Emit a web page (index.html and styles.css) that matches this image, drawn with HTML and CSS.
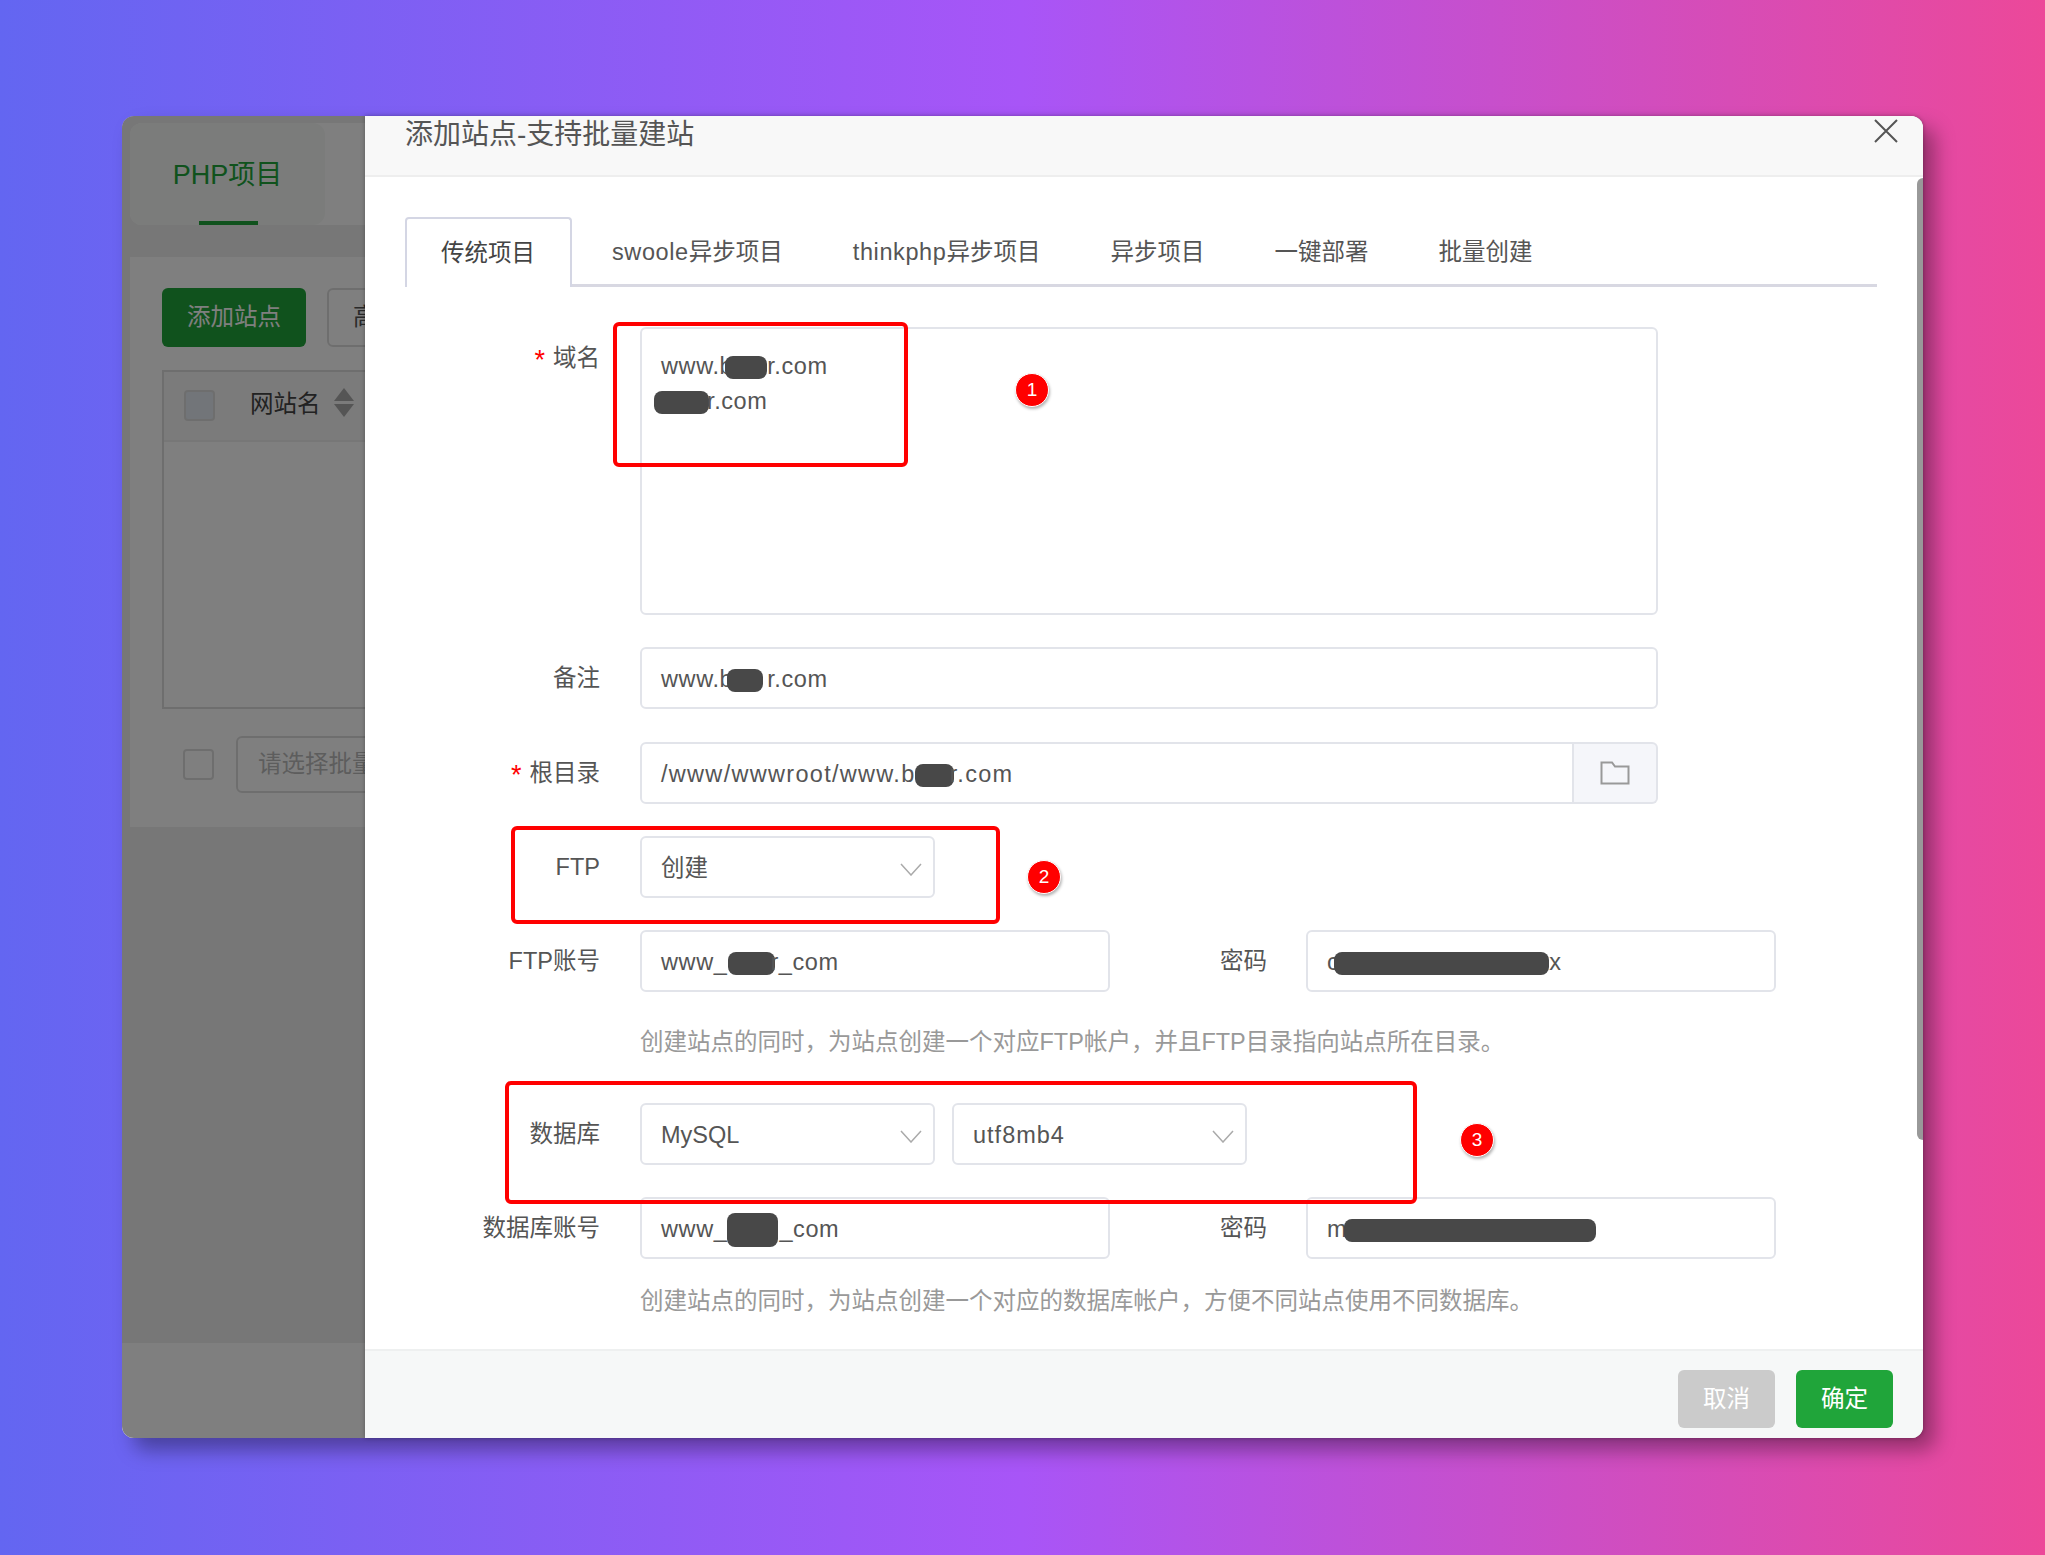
FILE: index.html
```html
<!DOCTYPE html>
<html lang="en">
<head>
    <meta charset="UTF-8">
    <title>添加站点</title>
    <link rel="stylesheet" href="styles.css">
</head>
<body>
<div class="window">

    <!-- page behind the dialog -->
    <div class="page">
        <div class="page-tabs">
            <div class="page-tab">PHP项目<i class="page-tab-line"></i></div>
        </div>
        <div class="page-card">
            <div class="page-btns">
                <div class="btn-add">添加站点</div>
                <div class="btn-adv">高级设置</div>
            </div>
            <div class="page-table">
                <div class="page-table-head">
                    <i class="check check-head"></i>
                    <span class="th-name">网站名</span>
                    <i class="sort"></i>
                </div>
            </div>
            <div class="page-batch">
                <i class="check"></i>
                <div class="batch-select">请选择批量操作</div>
            </div>
        </div>
        <div class="page-foot"></div>
    </div>
    <div class="shade"></div>

    <!-- dialog -->
    <div class="modal">
        <div class="modal-head">
            <div class="modal-title">添加站点-支持批量建站</div>
            <svg class="modal-close" width="24" height="24" viewBox="0 0 24 24"><path d="M1 1L23 23M23 1L1 23" stroke="#555" stroke-width="2" fill="none"/></svg>
        </div>
        <div class="modal-body">
            <div class="tabs">
                <div class="tab tab-on">传统项目</div>
                <div class="tab"><span class="lat">swoole</span>异步项目</div>
                <div class="tab"><span class="lat">thinkphp</span>异步项目</div>
                <div class="tab">异步项目</div>
                <div class="tab">一键部署</div>
                <div class="tab">批量创建</div>
            </div>

            <div class="form">
                <div class="row">
                    <div class="label"><em>*</em>域名</div>
                    <div class="field area">
                        <div>www.b<i class="blob b-d1"></i>r.com</div>
                        <div><i class="blob b-d2"></i>r.com</div>
                    </div>
                </div>
                <div class="row">
                    <div class="label">备注</div>
                    <div class="field wide">www.b<i class="blob b-note"></i>r.com</div>
                </div>
                <div class="row">
                    <div class="label"><em>*</em>根目录</div>
                    <div class="group">
                        <div class="field group-input">/www/wwwroot/www.b<i class="blob b-root"></i>r.com</div>
                        <div class="group-btn">
                            <svg width="30" height="24" viewBox="0 0 30 24"><path d="M1.5 1.5H12L15 5.5H28.5V22.5H1.5Z" fill="none" stroke="#999" stroke-width="2"/></svg>
                        </div>
                    </div>
                </div>
                <div class="row">
                    <div class="label">FTP</div>
                    <div class="field select">创建
                        <svg class="caret" width="22" height="13" viewBox="0 0 22 13"><path d="M1 1L11 12L21 1" fill="none" stroke="#aaa" stroke-width="1.5"/></svg>
                    </div>
                </div>
                <div class="row row-pair">
                    <div class="label">FTP账号</div>
                    <div class="field half">www_<i class="blob b-ftp"></i>r_com</div>
                    <div class="label label-pass">密码</div>
                    <div class="field half half-pass">c<i class="blob b-pass"></i>x</div>
                </div>
                <div class="help">创建站点的同时，为站点创建一个对应FTP帐户，并且FTP目录指向站点所在目录。</div>
                <div class="row">
                    <div class="label">数据库</div>
                    <div class="field select">MySQL
                        <svg class="caret" width="22" height="13" viewBox="0 0 22 13"><path d="M1 1L11 12L21 1" fill="none" stroke="#aaa" stroke-width="1.5"/></svg>
                    </div>
                    <div class="field select select-2">utf8mb4
                        <svg class="caret" width="22" height="13" viewBox="0 0 22 13"><path d="M1 1L11 12L21 1" fill="none" stroke="#aaa" stroke-width="1.5"/></svg>
                    </div>
                </div>
                <div class="row row-pair">
                    <div class="label">数据库账号</div>
                    <div class="field half">www_<i class="blob b-db"></i>_com</div>
                    <div class="label label-pass">密码</div>
                    <div class="field half half-pass">m<i class="blob b-dbpass"></i></div>
                </div>
                <div class="help help-tight">创建站点的同时，为站点创建一个对应的数据库帐户，方便不同站点使用不同数据库。</div>
            </div>
            <div class="scrollbar"></div>
        </div>
        <div class="modal-foot">
            <div class="btn btn-cancel">取消</div>
            <div class="btn btn-ok">确定</div>
        </div>
    </div>

    <!-- red notes drawn on the screenshot -->
    <div class="mark mark-1"></div>
    <div class="mark mark-2"></div>
    <div class="mark mark-3"></div>
    <div class="badge badge-1">1</div>
    <div class="badge badge-2">2</div>
    <div class="badge badge-3">3</div>
</div>
</body>
</html>
```

FILE: styles.css
```css
*{
    box-sizing: border-box;
}
html,body{
    margin: 0;
    height: 100%;
}
body{
    padding: 116px 122px 117px;
    background: linear-gradient(to right, #6366f1, #a855f7 50%, #ec4899);
    font-family: "Liberation Sans", "Noto Sans CJK SC", sans-serif;
    font-size: 23.5px;
    color: #555;
    overflow: hidden;
}
i,em{
    font-style: normal;
}
.window{
    position: relative;
    height: 1322px;
    border-radius: 12px;
    box-shadow: 12px 12px 20px rgba(0,0,0,0.35);
}

/* page behind */
.page{
    height: 100%;
    display: flex;
    flex-direction: column;
    background: #efefef;
    border-radius: 12px;
    overflow: hidden;
}
.page-tabs{
    margin: 7px 0 32px 8px;
    height: 102px;
    background: #fff;
    border-radius: 12px 0 0 12px;
}
.page-tab{
    position: relative;
    width: 195px;
    height: 102px;
    background: #f6f9f6;
    border-radius: 12px;
    color: #20a53a;
    font-size: 27px;
    line-height: 104px;
    text-align: center;
}
.page-tab-line{
    position: absolute;
    left: 69px;
    bottom: 0;
    width: 59px;
    height: 4px;
    background: #20a53a;
}
.page-card{
    margin-left: 8px;
    height: 570px;
    padding: 31px 0 0 32px;
    background: #fff;
}
.page-btns{
    display: flex;
    gap: 21px;
}
.btn-add{
    width: 144px;
    height: 59px;
    line-height: 59px;
    text-align: center;
    color: #fff;
    background: #20a53a;
    border-radius: 6px;
}
.btn-adv{
    flex: none;
    width: 140px;
    height: 59px;
    line-height: 55px;
    padding-left: 24px;
    border: 2px solid #ddd;
    border-radius: 6px;
    white-space: nowrap;
}
.page-table{
    margin-top: 23px;
    height: 339px;
    border: 2px solid #ddd;
}
.page-table-head{
    display: flex;
    align-items: center;
    height: 70px;
    padding-left: 20px;
    background: #f6f6f6;
    border-bottom: 2px solid #eee;
}
.check{
    flex: none;
    width: 31px;
    height: 31px;
    border: 2px solid #ddd;
    border-radius: 4px;
}
.check-head{
    background: #e4ebf2;
    margin-bottom: 2px;
}
.th-name{
    margin: 0 0 8px 35px;
    color: #444;
}
.sort{
    position: relative;
    margin: 0 0 8px 23px;
    height: 29px;
}
.sort::before,.sort::after{
    content: "";
    position: absolute;
    left: -10px;
    border-left: 10px solid transparent;
    border-right: 10px solid transparent;
}
.sort::before{
    top: 0;
    border-bottom: 13px solid #aaa;
}
.sort::after{
    bottom: 0;
    border-top: 13px solid #aaa;
}
.page-batch{
    display: flex;
    align-items: center;
    gap: 22px;
    margin: 27px 0 0 21px;
}
.batch-select{
    flex: none;
    width: 250px;
    height: 57px;
    line-height: 53px;
    padding-left: 20px;
    border: 2px solid #ddd;
    border-radius: 6px;
    color: #bbb;
    white-space: nowrap;
}
.page-foot{
    margin-top: auto;
    height: 95px;
    background: #fff;
}
.shade{
    position: absolute;
    inset: 0;
    background: rgba(0,0,0,0.5);
    border-radius: 12px;
}

/* dialog */
.modal{
    position: absolute;
    top: 0;
    left: 243px;
    right: 0;
    bottom: 0;
    display: flex;
    flex-direction: column;
    background: #fff;
    border-radius: 0 12px 12px 0;
    box-shadow: 0 0 4px rgba(0,0,0,0.3);
    overflow: hidden;
}
.modal-head{
    flex: none;
    display: flex;
    justify-content: space-between;
    height: 61px;
    padding: 0 25px 0 40px;
    background: #f8f8f8;
    border-bottom: 2px solid #eee;
}
.modal-title{
    font-size: 28px;
    line-height: 37px;
}
.modal-close{
    margin-top: 3px;
}
.modal-body{
    position: relative;
    flex: 1;
    padding: 40px 46px 0 40px;
}
.tabs{
    display: flex;
    height: 70px;
    border-bottom: 3px solid #d8d8e2;
}
.tab{
    height: 70px;
    padding: 0 35px;
    line-height: 70px;
    white-space: nowrap;
}
.lat{
    letter-spacing: 0.6px;
}
.tab-on{
    width: 167px;
    margin-right: 5px;
    border: 2px solid #d4d6e4;
    border-bottom: 0;
    border-radius: 4px 4px 0 0;
    background: #fff;
    color: #444;
    padding: 0 34px;
    line-height: 68px;
}
.form{
    margin-top: 40px;
}
.row{
    display: flex;
    margin-bottom: 32.3px;
}
.label{
    flex: none;
    width: 195px;
    margin-right: 40px;
    line-height: 62px;
    text-align: right;
    white-space: nowrap;
}
.label em{
    margin-right: 8px;
    font-size: 27px;
    line-height: 0;
    vertical-align: -3px;
    color: #f00;
}
.field{
    position: relative;
    flex: none;
    height: 62px;
    padding: 0 19px;
    line-height: 61px;
    letter-spacing: 0.6px;
    border: 2px solid #e2e4ea;
    border-radius: 6px;
    white-space: nowrap;
    overflow: hidden;
}
.area{
    width: 1018px;
    height: 288px;
    padding-top: 20px;
    line-height: 35px;
}
.wide{
    width: 1018px;
}
.group{
    display: flex;
    width: 1018px;
}
.group-input{
    flex: 1;
    letter-spacing: 1.3px;
    border-radius: 6px 0 0 6px;
}
.group-btn{
    flex: none;
    display: flex;
    align-items: center;
    justify-content: center;
    width: 84px;
    height: 62px;
    background: #f5f6fa;
    border: 2px solid #e2e4ea;
    border-left: 0;
    border-radius: 0 6px 6px 0;
}
.select{
    width: 295px;
    letter-spacing: 0;
}
.select-2{
    margin-left: 17px;
    letter-spacing: 1px;
}
.caret{
    position: absolute;
    right: 11px;
    top: 25px;
}
.half{
    width: 470px;
}
.label-pass{
    width: 157px;
    margin-right: 39px;
}
.help{
    margin: 33px 0 44px 235px;
    line-height: 34px;
    color: #999;
    white-space: nowrap;
}
.row-pair{
    margin-bottom: 0;
}
.help-tight{
    margin-top: 25px;
    margin-bottom: 0;
}

/* covered parts of the text */
.blob{
    display: inline-block;
    height: 23px;
    vertical-align: -5px;
    background: #484848;
    border-radius: 8px;
}
.b-d1{
    width: 42px;
    margin: 0 0 0 -8px;
}
.b-d2{
    width: 55px;
    margin: 0 -2px 0 -7px;
}
.b-note{
    width: 36px;
    margin: 0 4px 0 -6px;
}
.b-root{
    width: 39px;
    margin: 0 -4px 0 -1px;
}
.b-ftp{
    width: 47px;
    margin: 0 -5px 0 1px;
}
.b-pass{
    width: 215px;
    margin: 0 0 0 -5px;
}
.b-db{
    width: 51px;
    height: 34px;
    vertical-align: -10px;
    margin: 0 1px 0 0;
}
.b-dbpass{
    width: 252px;
    margin-left: -3.5px;
}

/* footer */
.modal-foot{
    flex: none;
    display: flex;
    justify-content: flex-end;
    gap: 21px;
    height: 89px;
    padding: 19px 30px 0 0;
    background: #f6f8f8;
    border-top: 2px solid #eef0f0;
}
.btn{
    width: 97px;
    height: 58px;
    line-height: 58px;
    text-align: center;
    color: #fff;
    border-radius: 6px;
}
.btn-cancel{
    background: #cbcbcb;
}
.btn-ok{
    background: #20a53a;
}
.scrollbar{
    position: absolute;
    top: 1px;
    right: 0;
    width: 6px;
    height: 962px;
    background: #999;
    border-radius: 6px 0 0 6px;
}

/* annotations */
.mark{
    position: absolute;
    border: 4px solid #f00;
    border-radius: 6px;
}
.mark-1{
    left: 491px;
    top: 206px;
    width: 295px;
    height: 145px;
}
.mark-2{
    left: 389px;
    top: 710px;
    width: 489px;
    height: 98px;
}
.mark-3{
    left: 383px;
    top: 965px;
    width: 912px;
    height: 123px;
}
.badge{
    position: absolute;
    width: 34px;
    height: 34px;
    line-height: 32px;
    text-align: center;
    color: #fff;
    font-size: 19px;
    background: #f00;
    border: 1.5px solid #fff;
    border-radius: 50%;
    box-shadow: 1px 2px 3px rgba(0,0,0,0.3);
}
.badge-1{
    left: 893px;
    top: 257px;
}
.badge-2{
    left: 905px;
    top: 744px;
}
.badge-3{
    left: 1338px;
    top: 1007px;
}
```
